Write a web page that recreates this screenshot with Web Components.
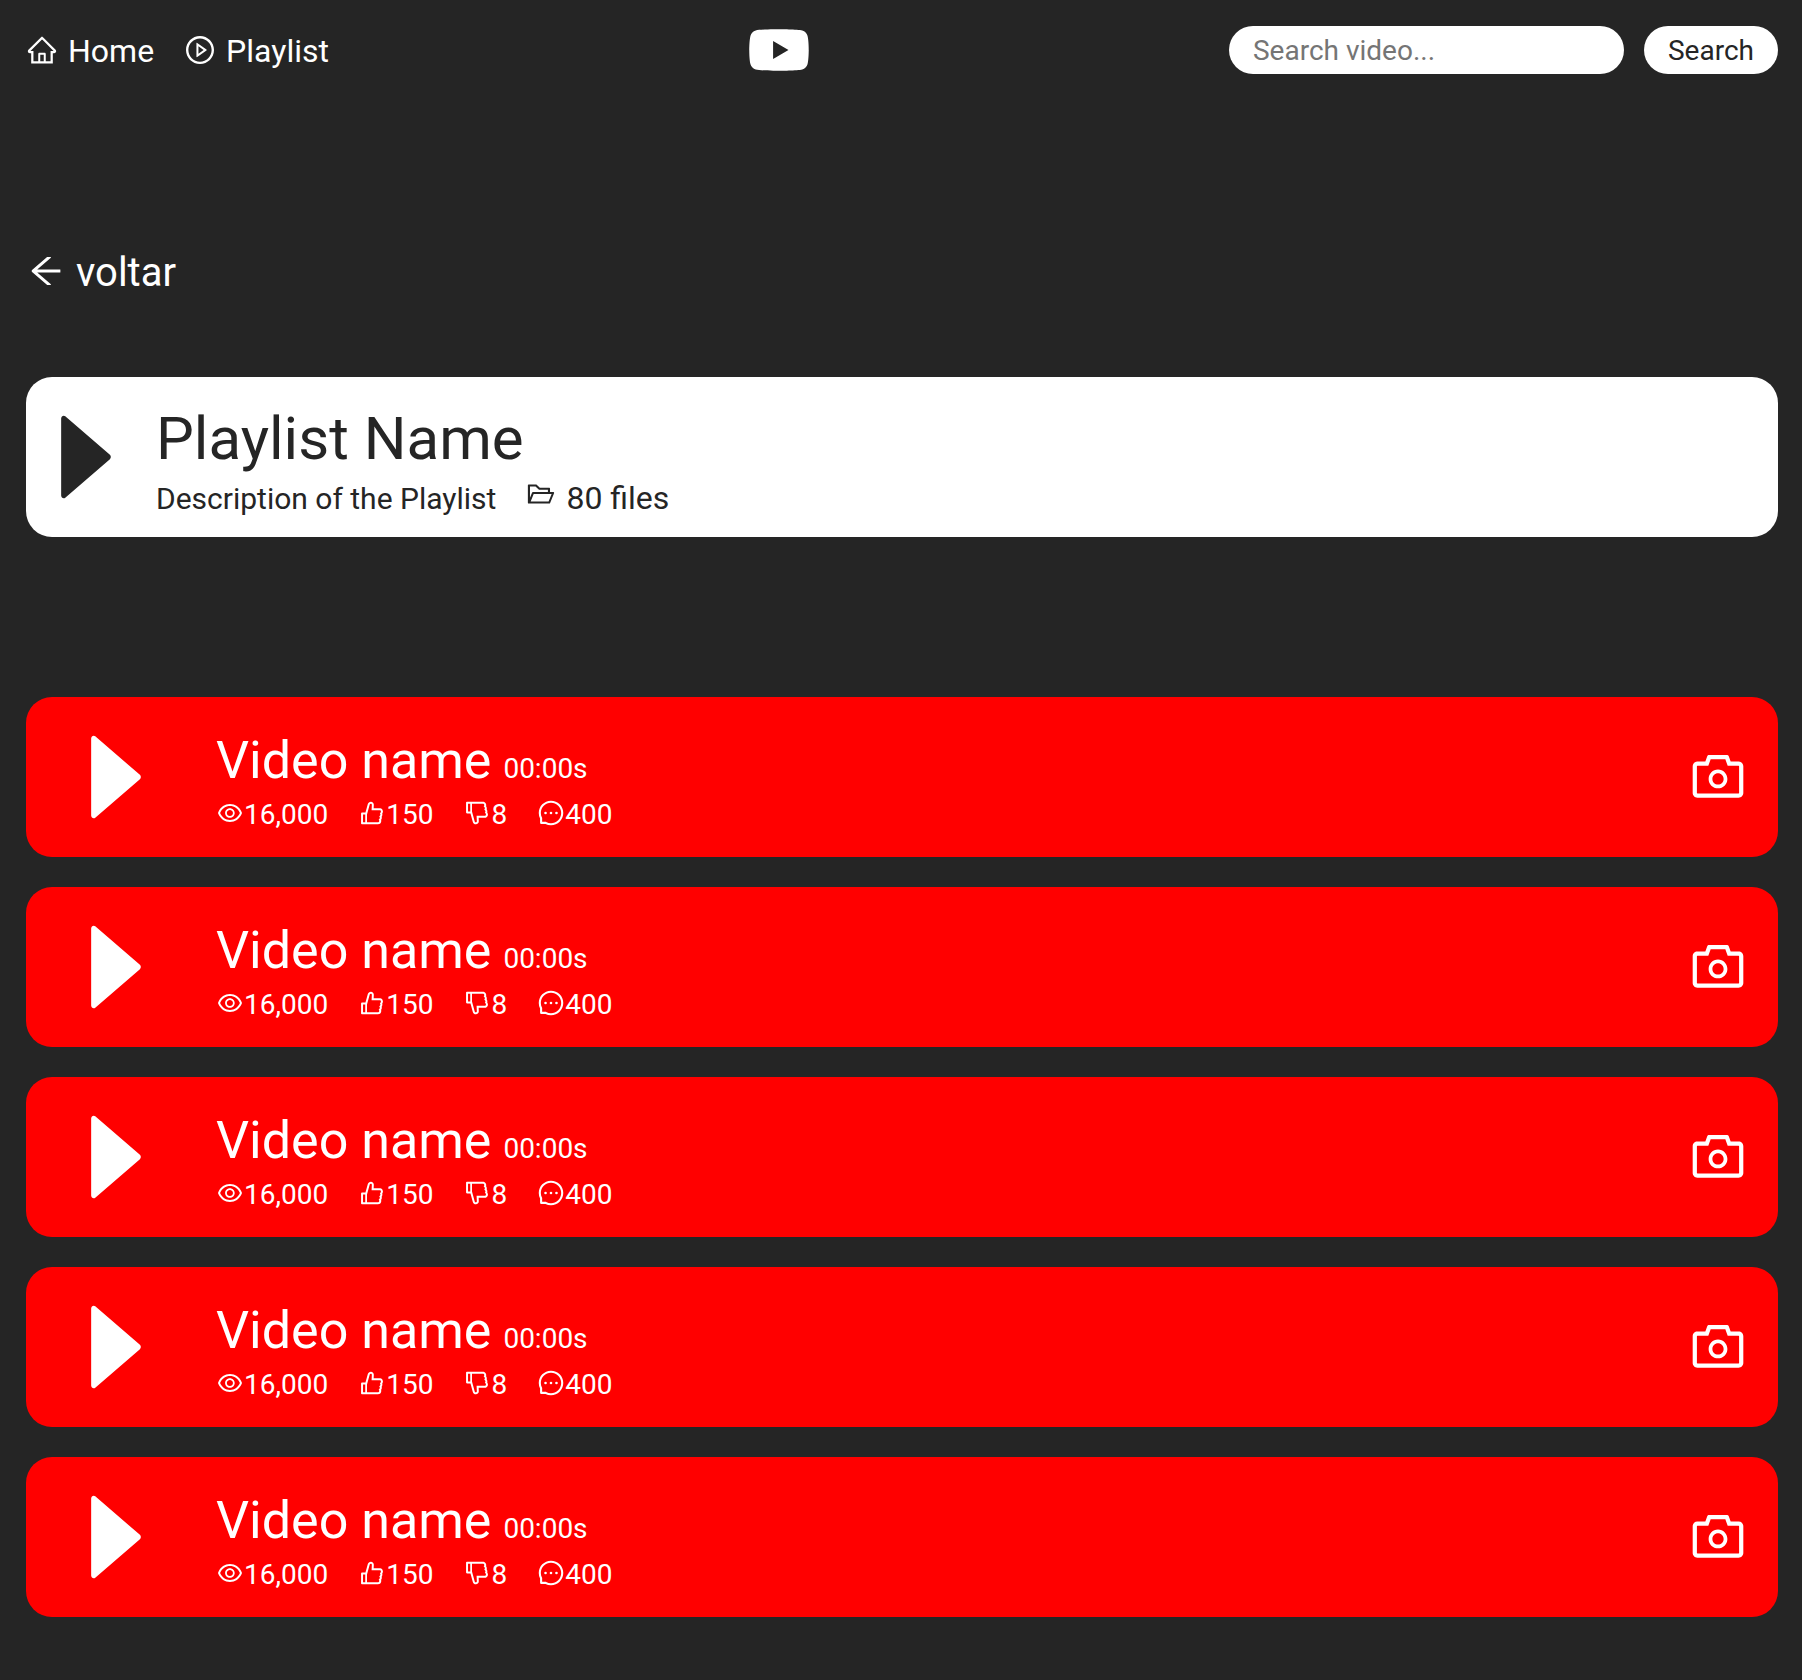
<!DOCTYPE html>
<html lang="en">
<head>
<meta charset="utf-8">
<meta name="viewport" content="width=device-width, initial-scale=1">
<title>Playlist</title>
<style>
  :root { --ink: #252525; --paper: #ffffff; --accent: #ff0000; }
  body {
    margin: 0;
    background: var(--ink);
    color: var(--paper);
    font-family: Roboto, "Liberation Sans", sans-serif;
    font-size: 28px;
  }
</style>
</head>
<body>
<playlist-page></playlist-page>

<script>
const LIKE = '<path d="M885.9 533.7c16.8-22.2 26.1-49.4 26.1-77.7 0-44.9-25.1-87.4-65.5-111.1a67.67 67.67 0 0 0-34.3-9.3H572.4l6-122.9c1.4-29.7-9.1-57.9-29.5-79.4A106.62 106.62 0 0 0 471 99.9c-52 0-98 35-111.8 85.1l-85.9 311H144c-17.7 0-32 14.3-32 32v364c0 17.7 14.3 32 32 32h601.3c9.2 0 18.2-1.8 26.5-5.4 47.6-20.3 78.3-66.8 78.3-118.4 0-12.6-1.8-25-5.4-37 16.8-22.2 26.1-49.4 26.1-77.7 0-12.6-1.8-25-5.4-37 16.8-22.2 26.1-49.4 26.1-77.7-.2-12.6-2-25.1-5.6-37.1zM184 852V568h81v284h-81zm636.4-353l-21.9 19 13.9 25.4a56.2 56.2 0 0 1 6.9 27.3c0 16.5-7.2 32.2-19.6 43l-21.9 19 13.9 25.4a56.2 56.2 0 0 1 6.9 27.3c0 16.5-7.2 32.2-19.6 43l-21.9 19 13.9 25.4a56.2 56.2 0 0 1 6.9 27.3c0 22.4-13.2 42.6-33.6 51.8H329V564.8l99.5-360.5a44.1 44.1 0 0 1 42.2-32.3c7.6 0 15.1 2.2 21.1 6.7 9.9 7.4 15.2 18.6 14.6 30.5l-9.6 198.4h314.4C829 418.5 840 436.9 840 456c0 16.5-7.2 32.1-19.6 43z"/>';

const ICONS = {
  home: '<path d="M946.5 505L560.1 118.8l-25.9-25.9a31.5 31.5 0 0 0-44.4 0L77.5 505a63.9 63.9 0 0 0-18.8 46c.4 35.2 29.7 63.3 64.9 63.3h42.5V940h691.8V614.3h43.4c17.1 0 33.2-6.7 45.3-18.8a63.6 63.6 0 0 0 18.7-45.3c0-17-6.7-33.1-18.8-45.2zM568 868H456V664h112v204zm217.9-325.7V868H632V640c0-22.1-17.9-40-40-40H432c-22.1 0-40 17.9-40 40v228H238.1V542.3h-96l370-369.7 23.1 23.1L882 542.3h-96.1z"/>',
  'play-circle': '<path d="M512 64C264.6 64 64 264.6 64 512s200.6 448 448 448 448-200.6 448-448S759.4 64 512 64zm0 820c-205.4 0-372-166.6-372-372s166.6-372 372-372 372 166.6 372 372-166.6 372-372 372z"/><path d="M719.4 499.1l-296.1-215A15.9 15.9 0 0 0 398 297v430c0 13.1 14.8 20.5 25.3 12.9l296.1-215a15.9 15.9 0 0 0 0-25.8zm-257.6 134V390.9L628.5 512 461.8 633.1z"/>',
  youtube: '<path d="M941.3 296.1a112.3 112.3 0 0 0-79.2-79.3C792.2 198 512 198 512 198s-280.2 0-350.1 18.7A112.12 112.12 0 0 0 82.7 296C64 366 64 512 64 512s0 146 18.7 215.9c10.3 38.6 40.7 69 79.2 79.3C231.8 826 512 826 512 826s280.2 0 350.1-18.8c38.6-10.3 68.9-40.7 79.2-79.3C960 658 960 512 960 512s0-146-18.7-215.9zM423 646V378l232 133-232 135z"/>',
  'arrow-left': '<path d="M872 474H286.9l350.2-304c5.6-4.9 2.2-14-5.2-14h-88.5c-3.9 0-7.6 1.4-10.5 3.9L155 487.8a31.96 31.96 0 0 0 0 48.3L535.1 866c1.5 1.3 3.3 2 5.2 2h91.5c7.4 0 10.8-9.2 5.2-14L286.9 550H872c4.4 0 8-3.6 8-8v-60c0-4.4-3.6-8-8-8z"/>',
  caret: '<path d="M715.8 493.5L335 165.1c-14.2-12.2-35-1.2-35 18.5v656.8c0 19.7 20.8 30.7 35 18.5l380.8-328.4c10.9-9.4 10.9-27.6 0-37z"/>',
  folder: '<path d="M928 444H820V330.4c0-17.7-14.3-32-32-32H473L355.7 186.2a8.15 8.15 0 0 0-5.5-2.2H96c-17.7 0-32 14.3-32 32v592c0 17.7 14.3 32 32 32h698c13 0 24.8-7.9 29.7-20l134-332c1.5-3.8 2.3-7.9 2.3-12 0-17.7-14.3-32-32-32zM136 256h188.5l119.6 114.4H748V444H238c-13 0-24.8 7.9-29.7 20L136 643.2V256zm635.3 512H159l103.3-256h612.4L771.3 768z"/>',
  eye: '<path d="M942.2 486.2C847.4 286.5 704.1 186 512 186c-192.2 0-335.4 100.5-430.2 300.3a60.3 60.3 0 0 0 0 51.5C176.6 737.5 319.9 838 512 838c192.2 0 335.4-100.5 430.2-300.3 7.7-16.2 7.7-35 0-51.5zM512 766c-161.3 0-279.4-81.8-362.7-254C232.6 339.8 350.7 258 512 258c161.3 0 279.4 81.8 362.7 254C791.5 684.2 673.4 766 512 766zm-4-430c-97.2 0-176 78.8-176 176s78.8 176 176 176 176-78.8 176-176-78.8-176-176-176zm0 288c-61.9 0-112-50.1-112-112s50.1-112 112-112 112 50.1 112 112-50.1 112-112 112z"/>',
  like: LIKE,
  dislike: '<g transform="translate(0 1024) scale(1 -1)">' + LIKE + '</g>',
  message: '<path d="M464 512a48 48 0 1 0 96 0 48 48 0 1 0-96 0zm200 0a48 48 0 1 0 96 0 48 48 0 1 0-96 0zm-400 0a48 48 0 1 0 96 0 48 48 0 1 0-96 0zm661.2-173.6c-22.6-53.7-55-101.9-96.3-143.3a444.35 444.35 0 0 0-143.3-96.3C630.6 75.7 572.2 64 512 64h-2c-60.6.3-119.3 12.3-174.5 35.9a445.35 445.35 0 0 0-142 96.5c-40.9 41.3-73 89.3-95.2 142.8-23 55.4-34.6 114.3-34.3 174.9A449.4 449.4 0 0 0 112 714v152a46 46 0 0 0 46 46h152.1A449.4 449.4 0 0 0 510 960h2.1c59.9 0 118-11.6 172.7-34.3a444.48 444.48 0 0 0 142.8-95.2c41.3-40.9 73.8-88.7 96.5-142 23.6-55.2 35.6-113.9 35.9-174.5.3-60.9-11.5-120-34.8-175.6zm-151.1 438C704 845.8 611 884 512 884h-1.7c-60.3-.3-120.2-15.3-173.1-43.5l-8.4-4.5H188V695.2l-4.5-8.4C155.3 633.9 140.3 574 140 513.7c-.4-99.7 37.7-193.3 107.6-263.8 69.8-70.5 163.1-109.5 262.8-109.9h1.7c50 0 98.5 9.7 144.2 28.9 44.6 18.7 84.6 45.6 119 80 34.3 34.3 61.3 74.4 80 119 19.4 46.2 29.1 95.2 28.9 145.8-.6 99.6-39.7 192.9-110.1 262.7z"/>',
  camera: '<path d="M864 248H728l-32.4-90.8a32.07 32.07 0 0 0-30.2-21.2H358.6c-13.5 0-25.6 8.5-30.1 21.2L296 248H160c-44.2 0-80 35.8-80 80v456c0 44.2 35.8 80 80 80h704c44.2 0 80-35.8 80-80V328c0-44.2-35.8-80-80-80zm8 536c0 4.4-3.6 8-8 8H160c-4.4 0-8-3.6-8-8V328c0-4.4 3.6-8 8-8h186.7l17.1-47.8 22.9-64.2h250.5l22.9 64.2 17.1 47.8H864c4.4 0 8 3.6 8 8v456zM512 384c-88.4 0-160 71.6-160 160s71.6 160 160 160 160-71.6 160-160-71.6-160-160-160zm0 256c-53 0-96-43-96-96s43-96 96-96 96 43 96 96-43 96-96 96z"/>'
};

function define(name, render) {
  customElements.define(name, class extends HTMLElement {
    connectedCallback() {
      if (this.shadowRoot) return;
      this.attachShadow({ mode: 'open' }).innerHTML = render(this);
    }
  });
}

/* One-em square icon that takes the colour of the text around it. */
define('ui-icon', el => `
  <style>
    :host { display: inline-block; width: 1em; height: 1em; vertical-align: -0.125em; flex: none; }
    svg { display: block; width: 100%; height: 100%; fill: currentColor; }
  </style>
  <svg viewBox="0 0 1024 1024" aria-hidden="true">${ICONS[el.getAttribute('name')]}</svg>`);

define('icon-link', el => `
  <style>
    :host { display: block; }
    a { color: inherit; text-decoration: none; white-space: nowrap; }
    ui-icon { margin-right: 10px; }
  </style>
  <a href="${el.getAttribute('href')}"><ui-icon name="${el.getAttribute('icon')}"></ui-icon><slot></slot></a>`);

define('search-form', () => `
  <style>
    :host { display: block; }
    form { display: flex; gap: 20px; margin: 0; }
    input, button {
      box-sizing: border-box; height: 48px; margin: 0; border: 0; border-radius: 24px;
      padding: 0 24px; background: var(--paper); color: var(--ink);
      font: inherit; font-size: 28px;
    }
    input { width: 395px; min-width: 0; }
    input::placeholder { color: #757575; }
    button { cursor: pointer; }
  </style>
  <form>
    <input type="text" aria-label="Search video" placeholder="Search video...">
    <button type="button">Search</button>
  </form>`);

define('top-bar', () => `
  <style>
    :host { display: block; }
    header { display: flex; align-items: center; justify-content: space-between; height: 48px; }
    nav { display: flex; gap: 30px; padding-top: 2px; font-size: 32px; line-height: 40px; }
    .logo { font-size: 68px; }
  </style>
  <header>
    <nav>
      <icon-link href="#home" icon="home">Home</icon-link>
      <icon-link href="#playlist" icon="play-circle">Playlist</icon-link>
    </nav>
    <ui-icon class="logo" name="youtube"></ui-icon>
    <search-form></search-form>
  </header>`);

define('playlist-header', () => `
  <style>
    :host {
      display: flex; align-items: center; gap: 10px; box-sizing: border-box; min-height: 160px;
      border-radius: 26px; background: var(--paper); color: var(--ink);
    }
    .play { font-size: 120px; }
    .info { padding-top: 8px; }
    h1 { margin: 0 0 4px; font-size: 60px; font-weight: 400; line-height: 70px; }
    .meta { display: flex; align-items: baseline; gap: 30px; font-size: 30px; line-height: 40px; }
    .files { font-size: 32px; }
    .files ui-icon { margin-right: 10px; font-size: 30px; vertical-align: baseline; }
  </style>
  <ui-icon class="play" name="caret"></ui-icon>
  <div class="info">
    <h1><slot name="title"></slot></h1>
    <div class="meta">
      <slot name="description"></slot>
      <span class="files"><ui-icon name="folder"></ui-icon><slot name="files"></slot></span>
    </div>
  </div>`);

define('video-stat', el => `
  <style>:host { display: block; white-space: nowrap; }</style>
  <ui-icon name="${el.getAttribute('icon')}"></ui-icon><slot></slot>`);

define('video-card', el => `
  <style>
    :host {
      display: flex; align-items: center; box-sizing: border-box; min-height: 160px; padding: 0 30px;
      border-radius: 26px; background: var(--accent); color: var(--paper);
    }
    .play { font-size: 120px; }
    .info { flex: 1; margin-left: 40px; padding-top: 6px; }
    .title { display: flex; align-items: baseline; gap: 12px; line-height: 60px; }
    h2 { margin: 0; font-size: 52px; font-weight: 400; }
    .stats { display: flex; gap: 30px; line-height: 30px; }
    button { display: flex; margin: 0; padding: 0; border: 0; background: none; color: inherit; font-size: 60px; cursor: pointer; }
  </style>
  <ui-icon class="play" name="caret"></ui-icon>
  <div class="info">
    <div class="title"><h2><slot></slot></h2><span>${el.getAttribute('duration')}</span></div>
    <div class="stats">
      <video-stat icon="eye">${el.getAttribute('views')}</video-stat>
      <video-stat icon="like">${el.getAttribute('likes')}</video-stat>
      <video-stat icon="dislike">${el.getAttribute('dislikes')}</video-stat>
      <video-stat icon="message">${el.getAttribute('comments')}</video-stat>
    </div>
  </div>
  <button type="button" aria-label="Snapshot"><ui-icon name="camera"></ui-icon></button>`);

define('playlist-page', () => `
  <style>
    :host { display: block; padding: 26px 24px 60px 26px; }
    .back { margin-top: 175px; font-size: 40px; line-height: 48px; }
    playlist-header { margin-top: 80px; }
    main { display: grid; gap: 30px; margin-top: 160px; }
  </style>
  <top-bar></top-bar>
  <icon-link class="back" href="#back" icon="arrow-left">voltar</icon-link>
  <playlist-header>
    <span slot="title">Playlist Name</span>
    <span slot="description">Description of the Playlist</span>
    <span slot="files">80 files</span>
  </playlist-header>
  <main>
    ${'<video-card duration="00:00s" views="16,000" likes="150" dislikes="8" comments="400">Video name</video-card>'.repeat(5)}
  </main>`);
</script>
</body>
</html>
